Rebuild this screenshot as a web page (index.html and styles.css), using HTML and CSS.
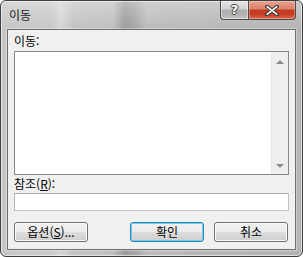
FILE: index.html
```html
<!DOCTYPE html>
<html lang="ko-KR">
  <head>
    <meta charset="UTF-8" />
    <meta name="viewport" content="width=device-width, initial-scale=1.0" />
    <title>이동</title>
    <link rel="stylesheet" href="styles.css">
  </head>

  <body>
    <div class="window">
      <!-- 제목 표시줄 -->
      <div class="titlebar">
        <span class="title">이동</span>
        <div class="caption-btns">
          <button type="button" class="cap-btn cap-help"><span>?</span></button>
          <button type="button" class="cap-btn cap-close">
            <svg width="14" height="11" viewBox="0 0 14 11">
              <path d="M2 1.5 L12 9.5 M12 1.5 L2 9.5" stroke="#3b3b3b" stroke-width="3.6" stroke-linecap="square" />
              <path d="M2.4 1.9 L11.6 9.1 M11.6 1.9 L2.4 9.1" stroke="#fff" stroke-width="1.8" stroke-linecap="square" />
            </svg>
          </button>
        </div>
      </div>

      <!-- 본문 -->
      <div class="client">
        <label class="field-label label-goto">이동:</label>
        <div class="listbox">
          <div class="list-items"></div>
          <div class="scrollbar">
            <span class="arrow-box"><span class="arrow up"></span></span>
            <span class="arrow-box"><span class="arrow down"></span></span>
          </div>
        </div>
        <label class="field-label label-ref" for="ref">참조(<u>R</u>):</label>
        <input type="text" id="ref" class="ref-input" />
        <div class="button-row">
          <button type="button" class="btn">옵션(<u>S</u>)...</button>
          <div class="btn-group">
            <button type="button" class="btn btn-default">확인</button>
            <button type="button" class="btn">취소</button>
          </div>
        </div>
      </div>
    </div>
  </body>
</html>
```

FILE: styles.css
```css
html,
body {
  margin: 0;
  padding: 0;
}

body {
  font-family: "Noto Sans CJK KR", "Noto Sans", sans-serif;
  font-size: 12px;
  color: #000;
  background: #fff;
}

button {
  cursor: pointer;
  font-family: inherit;
  font-size: inherit;
  padding: 0;
  margin: 0;
}

/* 창 테두리 (유리 효과) */
.window {
  box-sizing: border-box;
  width: 303px;
  height: 257px;
  border: 1px solid #3f3f3f;
  border-radius: 6px;
  overflow: hidden;
  background:
    linear-gradient(rgba(255, 255, 255, 0.3), rgba(255, 255, 255, 0) 28px),
    linear-gradient(to right, #c6c6c6 0, #c8c8c8 50px, #d6d6d6 60px, #c3c3c3 72px, #bfbfbf 112px, #9b9b9b 124px, #a6a6a6 134px, #bcbcbc 146px, #b8b8b8 200px, #b4b4b4 100%);
  box-shadow: inset 0 0 0 1px rgba(255, 255, 255, 0.55);
}

.titlebar {
  display: flex;
  justify-content: space-between;
  align-items: flex-start;
  height: 28px;
}

.title {
  padding: 5px 0 0 8px;
  line-height: 17px;
  color: #1a1a1a;
}

/* 도움말, 닫기 버튼 */
.caption-btns {
  display: flex;
  margin-right: 6px;
}

.cap-btn {
  height: 19px;
  border: 1px solid #4a4a4a;
  border-top: none;
  display: flex;
  align-items: center;
  justify-content: center;
}

.cap-help {
  width: 28px;
  border-right: none;
  border-radius: 0 0 0 4px;
  background: linear-gradient(#e4e4e4 0, #d2d2d2 45%, #aeaeae 50%, #b4b4b4 80%, #c6c6c6 100%);
  box-shadow: inset 0 0 0 1px rgba(255, 255, 255, 0.45);
}

.cap-help span {
  font-family: "DejaVu Sans", sans-serif;
  font-weight: bold;
  font-size: 13px;
  line-height: 13px;
  color: #fff;
  text-shadow: -1px 0 #444, 1px 0 #444, 0 -1px #444, 0 1px #444;
  margin-top: -1px;
}

.cap-close {
  width: 48px;
  border-radius: 0 0 4px 0;
  background: linear-gradient(#e8a593 0, #d98068 45%, #c5391e 50%, #c84026 75%, #dc6a4d 100%);
  box-shadow: inset 0 0 0 1px rgba(255, 220, 210, 0.4);
}

/* 클라이언트 영역 */
.client {
  box-sizing: border-box;
  display: flex;
  flex-direction: column;
  margin-left: 6px;
  width: 289px;
  height: 221px;
  padding: 0 6px;
  border: 1px solid #6f6f6f;
  background: #f0f0f0;
  box-shadow: 0 0 0 1px rgba(255, 255, 255, 0.35);
}

.field-label {
  display: block;
  line-height: 17px;
}

.label-goto {
  height: 21px;
  padding-top: 2px;
  box-sizing: border-box;
}

.label-ref {
  height: 18px;
  padding-top: 0;
  box-sizing: border-box;
}

/* 목록 상자 */
.listbox {
  box-sizing: border-box;
  display: flex;
  height: 124px;
  border: 1px solid #828790;
  background: #fff;
}

.list-items {
  flex: 1;
}

.scrollbar {
  width: 17px;
  display: flex;
  flex-direction: column;
  justify-content: space-between;
  background: #efefef;
  border-left: 1px solid #e6e6e6;
  box-sizing: border-box;
}

.arrow-box {
  display: flex;
  align-items: center;
  justify-content: center;
  height: 17px;
}

.arrow {
  width: 0;
  height: 0;
  border-left: 4px solid transparent;
  border-right: 4px solid transparent;
}

.arrow.up {
  border-bottom: 4px solid #8c8c8c;
  margin-top: 2px;
}

.arrow.down {
  border-top: 4px solid #8c8c8c;
  margin-top: 1px;
}

/* 참조 입력 */
.ref-input {
  box-sizing: border-box;
  height: 18px;
  margin: 0;
  padding: 0 2px;
  border: 1px solid #c3c3c3;
  border-top-color: #aaaaaa;
  border-left-color: #b4b4b4;
  background: #fff;
  outline: none;
}

/* 하단 버튼 */
.button-row {
  display: flex;
  justify-content: space-between;
  margin: 11px 1px 0 0;
}

.btn-group {
  display: flex;
  gap: 10px;
}

.btn {
  box-sizing: border-box;
  width: 74px;
  height: 20px;
  line-height: 16px;
  border: 1px solid #707070;
  border-radius: 3px;
  background: linear-gradient(#f2f2f2 0, #ebebeb 48%, #dddddd 52%, #cfcfcf 100%);
  box-shadow: inset 0 0 0 1px #fbfbfb;
  color: #000;
}

.btn-default {
  border-color: #3c7fb1;
  box-shadow: inset 0 0 0 1px #5fd3f8;
}
```
